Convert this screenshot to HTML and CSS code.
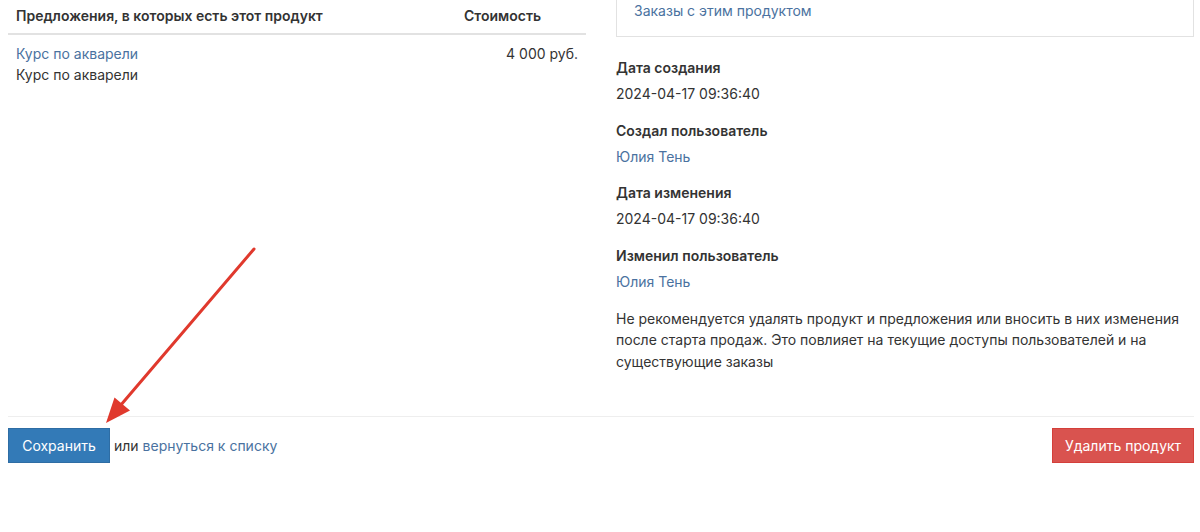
FILE: index.html
```html
<!DOCTYPE html>
<html lang="ru">
<head>
<meta charset="utf-8">
<title>Продукт</title>
<link rel="stylesheet" href="styles.css">
</head>
<body>
<div class="page">
  <div class="row">
    <div class="col">
      <table class="offers">
        <thead>
          <tr><th class="name">Предложения, в которых есть этот продукт</th><th class="cost">Стоимость</th></tr>
        </thead>
        <tbody>
          <tr>
            <td class="name"><a href="#" class="link">Курс по акварели</a><div>Курс по акварели</div></td>
            <td class="price">4 000 руб.</td>
          </tr>
        </tbody>
      </table>
    </div>
    <div class="col">
      <div class="box"><a href="#" class="link">Заказы с этим продуктом</a></div>
      <dl class="meta">
        <dt>Дата создания</dt>
        <dd>2024-04-17 09:36:40</dd>
        <dt>Создал пользователь</dt>
        <dd><a href="#" class="link">Юлия Тень</a></dd>
        <dt>Дата изменения</dt>
        <dd>2024-04-17 09:36:40</dd>
        <dt>Изменил пользователь</dt>
        <dd><a href="#" class="link">Юлия Тень</a></dd>
      </dl>
      <p class="note">Не рекомендуется удалять продукт и предложения или вносить в них изменения после старта продаж. Это повлияет на текущие доступы пользователей и на существующие заказы</p>
    </div>
  </div>
  <div class="actions">
    <div class="left"><button class="btn btn-primary">Сохранить</button> <span>или</span> <a href="#" class="link">вернуться к списку</a></div>
    <button class="btn btn-danger">Удалить продукт</button>
  </div>
  <svg class="arrow" width="1200" height="532" viewBox="0 0 1200 532">
    <line x1="254" y1="249" x2="120" y2="406" stroke="#e0392d" stroke-width="3" stroke-linecap="round"/>
    <polygon points="106,423 114.5,397.5 130,410.5" fill="#e0392d"/>
  </svg>
</div>
</body>
</html>
```

FILE: styles.css
```css
* { box-sizing: border-box; }
html, body { margin: 0; padding: 0; background: #fff; }
body {
  font-family: Inter, "Noto Sans", "Liberation Sans", sans-serif;
  font-size: 14px;
  line-height: 21px;
  color: #333;
  width: 1200px;
  height: 532px;
  overflow: hidden;
}
.page { position: relative; padding: 0 6px 0 8px; height: 532px; }
.link { color: #4a72a0; text-decoration: none; }
.row { display: grid; grid-template-columns: 578px 578px; column-gap: 30px; }
.offers { width: 100%; border-collapse: collapse; }
.offers th {
  font-weight: 600;
  text-align: left;
  padding: 5px 8px 7px;
  border-bottom: 2px solid #e2e2e2;
}
.offers th.cost { text-align: left; width: 130px; }
.offers td { padding: 8px; vertical-align: top; }
.offers td.price { text-align: right; }
.box {
  border: 1px solid #e2e2e2;
  border-top: 0;
  padding: 0 17px 15px;
}
.meta { margin: 20px 0 0; }
.meta dt { font-weight: 600; margin: 0; }
.meta dd { margin: 5px 0 15.5px; }
.note { margin: 16px 0 0; line-height: 21.5px; }
.actions {
  margin-top: 44px;
  border-top: 1px solid #eeeeee;
  padding-top: 11px;
  display: flex;
  justify-content: space-between;
  align-items: center;
}
.left { display: flex; align-items: center; gap: 4px; }
.btn {
  font: inherit;
  line-height: 21px;
  border: 1px solid transparent;
  padding: 6px 10px;
  color: #fff;
  cursor: pointer;
  border-radius: 0;
  white-space: nowrap;
}
.btn-primary { background: #337ab7; border-color: #2e6da4; width: 102px; }
.btn-danger { background: #d9534f; border-color: #d43f3a; width: 142px; }
.arrow { position: absolute; left: 0; top: 0; pointer-events: none; }
```
